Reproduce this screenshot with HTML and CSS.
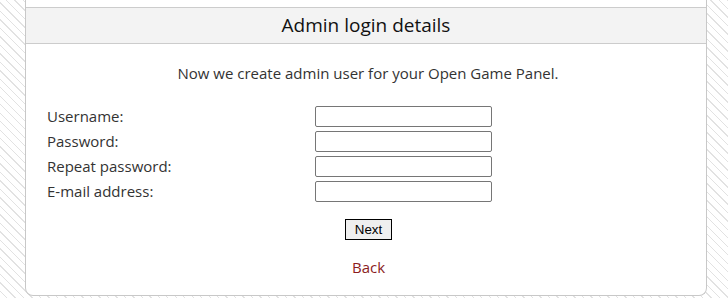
FILE: index.html
```html
<!DOCTYPE html>
<html lang="en">
<head>
  <meta charset="UTF-8">
  <title>OGP Install - Admin login details</title>
  <link rel="stylesheet" href="styles.css">
</head>
<body>

  <div class="main-box">
    <h2 class="box-title">Admin login details</h2>
    <p class="intro">Now we create admin user for your Open Game Panel.</p>

    <form class="admin-form" onsubmit="return false;">
      <div class="fields">
        <label for="username">Username:</label>
        <input type="text" id="username" name="username">
        <label for="password">Password:</label>
        <input type="password" id="password" name="password">
        <label for="password2">Repeat password:</label>
        <input type="password" id="password2" name="password2">
        <label for="email">E-mail address:</label>
        <input type="text" id="email" name="email">
      </div>
      <div class="actions">
        <button type="submit" class="next-btn">Next</button>
      </div>
    </form>

    <p class="back"><a href="#">Back</a></p>
  </div>

</body>
</html>
```

FILE: styles.css
```css
body {
  margin: 0;
  padding: 0;
  font-family: 'Open Sans', sans-serif;
  font-size: 15px;
  color: #333;
  background-color: #fff;
  background-image: repeating-linear-gradient(45deg, #fff 0, #fff 4.5px, #e2e2e2 4.5px, #e2e2e2 5.5px, #fff 5.5px, #fff 6px);
  height: 298px;
  overflow: hidden;
}

.main-box {
  margin: 0 21px 0 25px;
  padding-top: 7px;
  padding-bottom: 18px;
  background: #fff;
  border: 1px solid #c8c8c8;
  border-top: none;
  border-radius: 0 0 8px 8px;
}

.box-title {
  margin: 0;
  height: 35px;
  line-height: 34px;
  background: #f3f3f3;
  border-top: 1px solid #ccc;
  border-bottom: 1px solid #ccc;
  text-align: center;
  font-size: 19px;
  font-weight: normal;
  color: #111;
}

.intro {
  margin: 19px 0 0 0;
  line-height: 20px;
  text-align: center;
  padding-left: 4px;
}

.admin-form {
  margin-top: 23px;
}

.fields {
  display: grid;
  grid-template-columns: 268px 177px;
  row-gap: 4px;
  margin-left: 21px;
  align-items: center;
}

.fields label {
  line-height: 21px;
}

.fields input {
  box-sizing: border-box;
  width: 177px;
  height: 21px;
  margin: 0;
  padding: 1px 3px;
  border: 1px solid #767676;
  border-radius: 2px;
  background: #fff;
}

.actions {
  margin-top: 16px;
  text-align: center;
  padding-left: 5px;
}

.next-btn {
  font-family: 'Liberation Sans', Arial, sans-serif;
  font-size: 13.33px;
  height: 21px;
  padding: 1px 9px;
  border: 1px solid #000;
  background: #efefef;
  color: #000;
  border-radius: 0;
  cursor: pointer;
}

.back {
  margin: 17px 0 0 0;
  line-height: 20px;
  text-align: center;
  padding-left: 5px;
}

.back a {
  color: #8b1c1c;
  text-decoration: none;
}
```
